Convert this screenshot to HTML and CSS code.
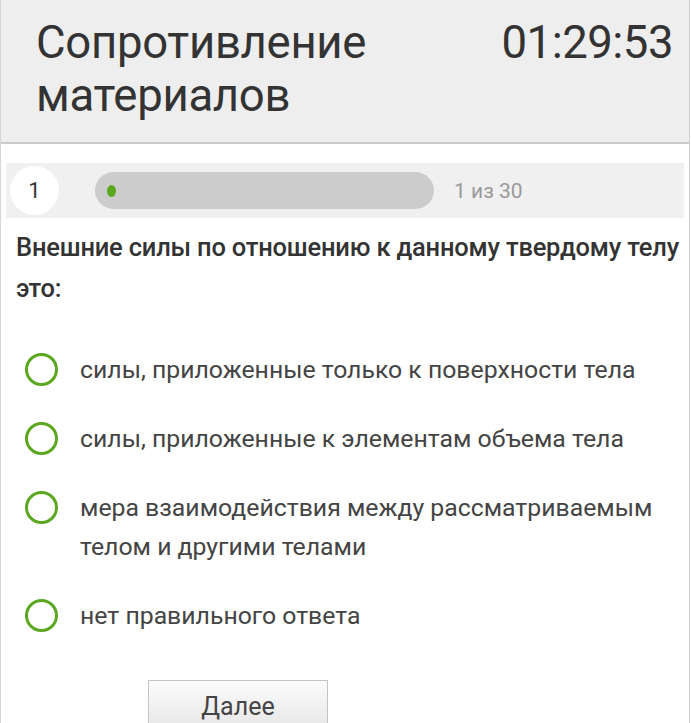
FILE: index.html
```html
<!DOCTYPE html>
<html lang="ru">
<head>
<meta charset="utf-8">
<title>Тест</title>
<link rel="stylesheet" href="styles.css">
</head>
<body>
<div class="page">
  <header class="head">
    <h1 class="title">Сопротивление материалов</h1>
    <div class="timer">01:29:53</div>
  </header>
  <div class="progress">
    <div class="num">1</div>
    <div class="bar"><div class="fill"></div></div>
    <div class="count">1 из 30</div>
  </div>
  <div class="question">Внешние силы по отношению к данному твердому телу это:</div>
  <ul class="options">
    <li class="opt"><span class="radio"></span><span class="label">силы, приложенные только к поверхности тела</span></li>
    <li class="opt"><span class="radio"></span><span class="label">силы, приложенные к элементам объема тела</span></li>
    <li class="opt"><span class="radio"></span><span class="label">мера взаимодействия между рассматриваемым телом и другими телами</span></li>
    <li class="opt"><span class="radio"></span><span class="label">нет правильного ответа</span></li>
  </ul>
  <div class="actions"><button class="next">Далее</button></div>
</div>
</body>
</html>
```

FILE: styles.css
```css
html, body {
  margin: 0;
  padding: 0;
  background: #fff;
}
body {
  font-family: Roboto, "Noto Sans", sans-serif;
  color: #333;
}
.page {
  width: 688px;
  min-height: 723px;
  border-left: 1px solid #d6d6d6;
  border-right: 1px solid #cfcfcf;
  box-sizing: content-box;
}
.head {
  background: #eeeeee;
  border-bottom: 2px solid #cccccc;
  height: 144px;
  display: flex;
  justify-content: space-between;
  align-items: flex-start;
  padding: 0 16px 0 35px;
  box-sizing: border-box;
}
.title {
  margin: 16px 0 0 0;
  font-weight: 400;
  font-size: 45.5px;
  line-height: 53px;
  width: 360px;
  color: #333;
  letter-spacing: -0.3px;
}
.timer {
  margin-top: 16px;
  font-size: 45.5px;
  line-height: 53px;
  color: #333;
  letter-spacing: -0.5px;
}
.progress {
  margin: 19px 5px 0 5px;
  height: 55px;
  background: #f0f0f0;
  display: flex;
  align-items: center;
  padding-left: 4px;
}
.num {
  width: 49px;
  height: 49px;
  border-radius: 50%;
  background: #fff;
  display: flex;
  align-items: center;
  justify-content: center;
  font-size: 22px;
  color: #333;
}
.bar {
  margin-left: 36px;
  width: 339px;
  height: 37px;
  border-radius: 19px;
  background: #cccccc;
  display: flex;
  align-items: center;
  padding-left: 12px;
  box-sizing: border-box;
}
.fill {
  width: 9px;
  height: 12px;
  border-radius: 50%;
  background: #5aa81e;
}
.count {
  margin-left: 20px;
  font-size: 21px;
  color: #999;
}
.question {
  margin: 9px 0 0 15px;
  font-size: 25.5px;
  font-weight: 500;
  line-height: 41px;
  color: #333;
  letter-spacing: -0.2px;
}
.options {
  list-style: none;
  margin: 41px 0 0 0;
  padding: 0;
}
.opt {
  display: flex;
  align-items: flex-start;
  padding-left: 24px;
  margin-bottom: 30px;
}
.opt:last-child {
  margin-bottom: 0;
}
.radio {
  flex: none;
  width: 33px;
  height: 33px;
  border: 3px solid #5ba820;
  border-radius: 50%;
  box-sizing: border-box;
  margin-top: 3px;
}
.label {
  margin-left: 22px;
  font-size: 24.8px;
  line-height: 39px;
  color: #444;
  max-width: 585px;
}
.actions {
  padding-left: 147px;
  margin-top: 45px;
}
.next {
  width: 180px;
  height: 52px;
  border: 1px solid #c4c4c4;
  background: linear-gradient(#fbfbfb, #e6e6e6);
  font-family: Roboto, "Noto Sans", sans-serif;
  font-size: 25px;
  color: #444;
  padding: 0;
  cursor: pointer;
}
```
